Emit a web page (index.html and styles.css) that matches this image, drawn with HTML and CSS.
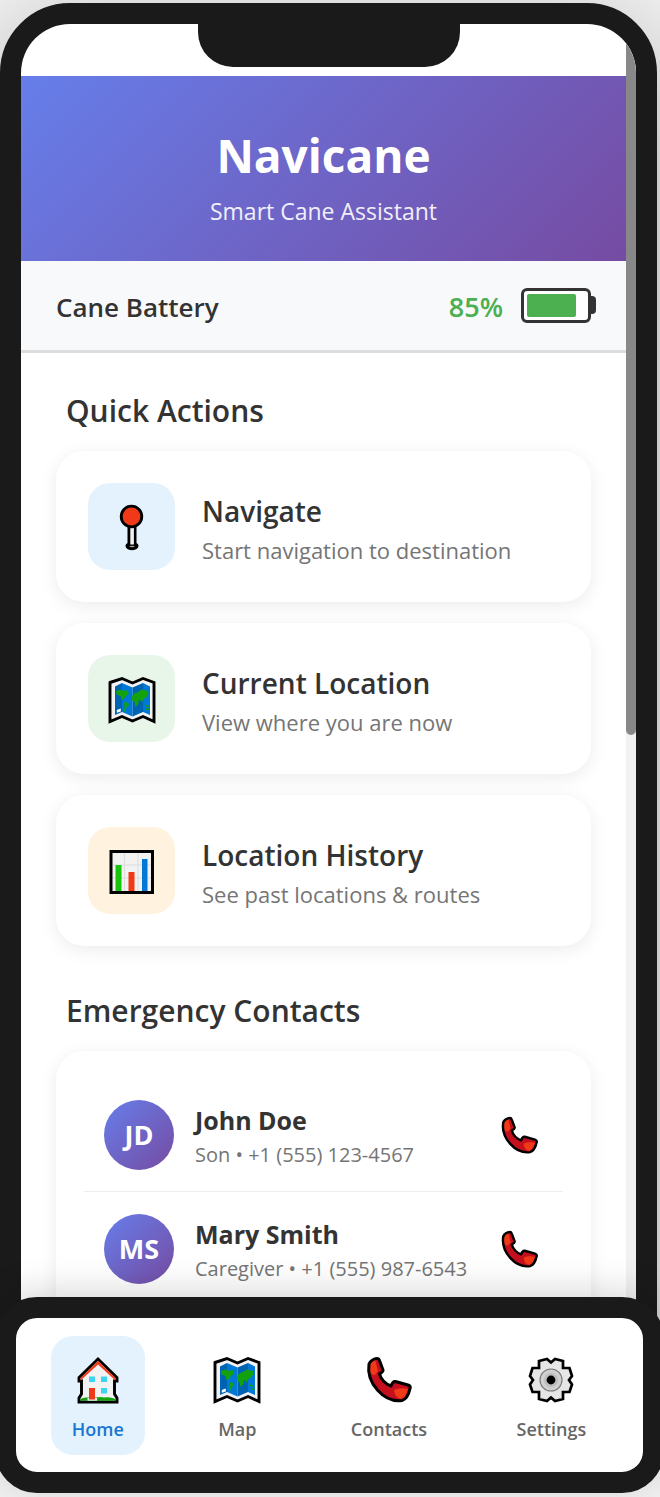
FILE: index.html
```html
<!DOCTYPE html>
<html lang="en">
<head>
<meta charset="utf-8">
<meta name="viewport" content="width=device-width, initial-scale=1">
<title>Navicane</title>
<link rel="stylesheet" href="styles.css">
</head>
<body>
<svg class="sprite" aria-hidden="true">
  <symbol id="pin" viewBox="0 0 48 48">
    <path d="M19.500 20v19c-2 1-2.500 3-1.500 4.500 2 3.500 10 3.500 12 0 1-1.500 .5-3.500-1.500-4.500V20z" fill="#000"/>
    <path d="M22.300 22h3.600v18.500h-3.600z" fill="#f0f0f0"/>
    <path d="M21 42.500q3-1.500 6 0-3 1.400-6 0z" fill="#aaa"/>
    <circle cx="23.500" cy="12.500" r="10.300" fill="#f03a17" stroke="#000" stroke-width="2.800"/>
  </symbol>
  <symbol id="map" viewBox="0 0 48 48">
    <path d="M2 6.500 14 2.500 24.500 7 35 2.500 46 6.500v39L35 40.500 24.500 45 14 40.500 2 45.500z" fill="#f2f2f5" stroke="#000" stroke-width="2.900"/>
    <path d="M7 10.500 14 7v29L7 39z" fill="#0063b1"/>
    <path d="M14 7l10.500 4.500v29L14 36z" fill="#0078d7"/>
    <path d="M24.500 11.500L35 7v29l-10.500 4.500z" fill="#0063b1"/>
    <path d="M35 7l7 3.500V39l-7-3z" fill="#0078d7"/>
    <path d="M8 15l4-1.500 4 1.500 4-1 .5 4-3 2.500-2 3-2 .5-1-4-4-1.500zM16 26l4 1 1 2-3 3-1 4-1-1 .5-5zM24 23l0-3 3-3 3-1 4-2.500 6 1.500 .5 3-2 3-3 2-2 4-1-3-2 1v3l-3 3-1-5-2-1zM37 28.500l4 1v1.500l-4-1zM38 32.500h3.500V34H38z" fill="#13a10e"/>
    <path d="M8.800 34l4-1.500v3l-4 1.300z" fill="#fff"/>
  </symbol>
  <symbol id="chart" viewBox="0 0 48 48">
    <path d="M3 3.500h41.500v41H3z" fill="#f2f2f2" stroke="#000" stroke-width="3"/>
    <path d="M16.500 5v38M30 5v38M5 17h38M5 30h38" stroke="#ddd" fill="none"/>
    <path d="M7.500 17h6v26h-6z" fill="#16c60c"/>
    <path d="M20.500 24h6v19h-6z" fill="#f03a17"/>
    <path d="M34 11h5.500v32H34z" fill="#0078d7"/>
  </symbol>
  <symbol id="phone" viewBox="0 0 48 48">
    <path d="M4 8c1-3 5-5.500 8-5.500 1 0 2 .5 2.500 2l3.500 9.500c.5 1.500-1 2.500-3.500 3.800 1.500 5.500 6 10 11.500 12.200 1-3 2-5 4.500-4.500L43 29c2 .6 2.500 1.600 2.200 3-1.200 5.500-4.200 11.500-8.200 12.500C19 47 1 27 4 8z" fill="#c50f1f"/>
    <path d="M4.500 8c1-3 4-4.500 5.500-5L13 15l-3 4c-3 0-5-2-6-5z" fill="#f03a17"/>
    <path d="M29 34q6-3 14-1-2 8-7 10-6-1-7-9z" fill="#f03a17"/>
    <path d="M4 8c1-3 5-5.500 8-5.500 1 0 2 .5 2.500 2l3.500 9.500c.5 1.500-1 2.500-3.500 3.800 1.500 5.500 6 10 11.500 12.200 1-3 2-5 4.500-4.500L43 29c2 .6 2.500 1.600 2.200 3-1.200 5.500-4.200 11.500-8.200 12.500C19 47 1 27 4 8z" fill="none" stroke="#000" stroke-width="3" stroke-linejoin="round"/>
  </symbol>
  <symbol id="house" viewBox="0 0 48 48">
    <path d="M24 3 43 21.500V25H40.500V38l2.500 4v4H5V42L7.500 38V25H5V21.500z" fill="#f2f2f2" stroke="#000" stroke-width="2.900"/>
    <path d="M24 5 41.500 22v2.500L24 8.500 6.500 24.500V22z" fill="#f03a17"/>
    <path d="M6.500 43q2.500-2 7-1.500h8.500q4-1 8 0 6-1 11.500 1.500v1.700h-35z" fill="#13a10e"/>
    <path d="M13.500 42h9.500v2.700h-9.500z" fill="#f2f2f2"/>
    <path d="M15 32h6v11.500h-6z" fill="#f03a17"/>
    <path d="M15 20.500h6V26h-6zM27 20.500h6V26h-6zM27 32h6v5.500h-6z" fill="#3bd5f0"/>
  </symbol>
  <symbol id="gear" viewBox="0 0 48 48">
    <path d="M12 5 20 3 24 6.500 28 3 36 5V12H42.500L45 20 42 24 45 28.500 42.500 36H36V43L28 45 24 41.500 20 45 12 43V36H5.500L3 28.500 6 24 3 20 5.500 12H12z" fill="#e6e6e6" stroke="#000" stroke-width="2.700"/>
    <circle cx="24" cy="24" r="11" fill="#d0d0d0" stroke="#777" stroke-width="1.100"/>
    <circle cx="24" cy="24" r="7" fill="#bdbdbd"/>
    <circle cx="24" cy="24" r="4.400" fill="#000"/>
  </symbol>
</svg>
<div class="phone">
  <div class="notch"></div>
  <div class="screen">
    <main class="app">
      <header class="header">
        <h1 class="brand">Navicane</h1>
        <p class="tagline">Smart Cane Assistant</p>
      </header>
      <section class="battery-bar">
        <span class="battery-label">Cane Battery</span>
        <span class="battery-value">85%</span>
        <span class="battery"><span class="battery-fill" style="width:85%"></span></span>
      </section>
      <div class="content">
        <section class="section">
          <h2 class="section-title">Quick Actions</h2>
          <div class="actions">
            <button class="card action" type="button">
              <span class="tile tile-blue"><svg class="icon"><use href="#pin"/></svg></span>
              <span class="action-text"><span class="action-title">Navigate</span><span class="action-desc">Start navigation to destination</span></span>
            </button>
            <button class="card action" type="button">
              <span class="tile tile-green"><svg class="icon"><use href="#map"/></svg></span>
              <span class="action-text"><span class="action-title">Current Location</span><span class="action-desc">View where you are now</span></span>
            </button>
            <button class="card action" type="button">
              <span class="tile tile-orange"><svg class="icon"><use href="#chart"/></svg></span>
              <span class="action-text"><span class="action-title">Location History</span><span class="action-desc">See past locations &amp; routes</span></span>
            </button>
          </div>
        </section>
        <section class="section">
          <h2 class="section-title">Emergency Contacts</h2>
          <ul class="card contacts">
            <li class="contact">
              <span class="avatar">JD</span>
              <div class="contact-text"><span class="contact-name">John Doe</span><span class="contact-desc">Son • +1 (555) 123-4567</span></div>
              <button class="call" type="button" aria-label="Call John Doe"><svg class="call-icon"><use href="#phone"/></svg></button>
            </li>
            <li class="contact">
              <span class="avatar">MS</span>
              <div class="contact-text"><span class="contact-name">Mary Smith</span><span class="contact-desc">Caregiver • +1 (555) 987-6543</span></div>
              <button class="call" type="button" aria-label="Call Mary Smith"><svg class="call-icon"><use href="#phone"/></svg></button>
            </li>
          </ul>
        </section>
      </div>
    </main>
    <div class="scroll-track"><div class="scroll-thumb"></div></div>
  </div>
</div>
<nav class="nav">
  <a class="nav-item nav-active" href="#home"><svg class="icon"><use href="#house"/></svg><span>Home</span></a>
  <a class="nav-item" href="#places"><svg class="icon"><use href="#map"/></svg><span>Map</span></a>
  <a class="nav-item" href="#contacts"><svg class="icon"><use href="#phone"/></svg><span>Contacts</span></a>
  <a class="nav-item" href="#settings"><svg class="icon"><use href="#gear"/></svg><span>Settings</span></a>
</nav>
</body>
</html>
```
FILE: styles.css
```css
* { box-sizing: border-box; }
body {
  margin: 0;
  height: 100vh;
  padding: 3px 0 4px;
  display: flex;
  flex-direction: column;
  overflow: hidden;
  background: #f0f0f0;
  color: #333;
  font-family: "Open Sans", "Noto Sans", sans-serif;
}
h1, h2, p, ul { margin: 0; padding: 0; }
button { font: inherit; color: inherit; border: 0; text-align: left; cursor: pointer; }
.sprite { position: absolute; width: 0; height: 0; }
.icon { width: 48px; height: 48px; flex: none; }

.phone {
  position: relative;
  flex: 1;
  min-height: 0;
  margin-right: 3px;
  border: 21px solid #1a1a1a;
  border-radius: 70px 70px 0 0;
  background: #1a1a1a;
  box-shadow: 0 35px 105px rgba(0, 0, 0, 0.3);
}
.screen {
  height: 100%;
  display: grid;
  grid-template-columns: 1fr 10px;
  overflow: hidden;
  background: #fff;
  border-radius: 49px 49px 0 0;
}
.notch {
  position: absolute;
  top: 0;
  left: 50%;
  width: 262px;
  height: 43px;
  transform: translateX(-50%);
  background: #1a1a1a;
  border-radius: 0 0 35px 35px;
}
.app { min-height: 0; padding-top: 52px; overflow: hidden; }
.scroll-track { background: #f1f1f1; }
.scroll-thumb { height: 55%; background: #888; border-radius: 5px; }

.header {
  padding: 47px 35px 33px;
  text-align: center;
  color: #fff;
  background: linear-gradient(135deg, #667eea 0%, #764ba2 100%);
}
.brand { font-size: 46px; line-height: 64px; font-weight: 700; }
.tagline { margin-top: 7px; font-size: 23px; line-height: 34px; opacity: 0.9; }

.battery-bar {
  display: flex;
  align-items: center;
  padding: 27px 35px;
  background: #f8f9fa;
  border-bottom: 3px solid #ddd;
}
.battery-label, .battery-value { padding-top: 3px; font-size: 26px; line-height: 32px; font-weight: 600; }
.battery-label { flex: 1; }
.battery-value { margin-right: 18px; font-size: 27px; color: #4caf50; }
.battery {
  position: relative;
  width: 70px;
  height: 35px;
  padding: 3px;
  border: 3px solid #333;
  border-radius: 6px;
  background: #fff;
}
.battery::after {
  content: "";
  position: absolute;
  top: 5px;
  right: -8px;
  width: 5px;
  height: 18px;
  background: #333;
  border-radius: 0 4px 4px 0;
}
.battery-fill { display: block; height: 100%; background: #4caf50; border-radius: 2px; }

.content { padding: 38px 35px; }
.section { margin-bottom: 45px; }
.section-title { margin: 0 10px 20px; font-size: 30px; line-height: 40px; font-weight: 600; }
.card {
  background: #fff;
  border-radius: 28px;
  box-shadow: 0 4px 18px rgba(0, 0, 0, 0.08);
}
.actions { display: grid; gap: 21px; }
.action { display: flex; align-items: center; gap: 27px; width: 100%; padding: 32px; }
.tile {
  display: flex;
  align-items: center;
  justify-content: center;
  flex: none;
  width: 87px;
  height: 87px;
  padding-top: 3px;
  border-radius: 22px;
}
.tile-blue { background: #e3f2fd; }
.tile-green { background: #e8f5e9; }
.tile-orange { background: #fff3e0; }
.action-text, .contact-text { display: flex; flex-direction: column; flex: 1; padding-top: 3px; }
.action-title { font-size: 28px; line-height: 40px; font-weight: 600; }
.action-desc { margin-top: 3px; font-size: 22px; line-height: 32px; color: #757575; }

.contacts { padding: 27px 28px; list-style: none; }
.contact { display: flex; align-items: center; gap: 21px; padding: 21px 20px; border-bottom: 1px solid #eee; }
.avatar {
  display: flex;
  align-items: center;
  justify-content: center;
  width: 70px;
  height: 70px;
  border-radius: 50%;
  color: #fff;
  font-size: 27px;
  font-weight: 700;
  background: linear-gradient(135deg, #667eea, #764ba2);
}
.contact-name { font-size: 25px; line-height: 36px; font-weight: 700; }
.contact-desc { margin-top: 2px; font-size: 20px; line-height: 30px; color: #757575; }
.call { display: flex; padding: 6px 4px 4px; background: none; }
.call-icon { width: 39px; height: 39px; }

.nav {
  position: relative;
  display: flex;
  align-items: center;
  justify-content: space-around;
  margin: -40px -4px 0 -5px;
  padding: 18px 12px 17px 11px;
  border: 21px solid #1a1a1a;
  border-radius: 42px;
  background: #fff;
  box-shadow: 0 -7px 35px rgba(0, 0, 0, 0.15);
}
.nav-item {
  display: flex;
  flex-direction: column;
  align-items: center;
  gap: 12px;
  padding: 20px 21px 13px;
  border-radius: 22px;
  color: #666;
  font-size: 18px;
  line-height: 26px;
  font-weight: 600;
  text-decoration: none;
}
.nav-active { color: #1976d2; background: #e3f2fd; }
```
